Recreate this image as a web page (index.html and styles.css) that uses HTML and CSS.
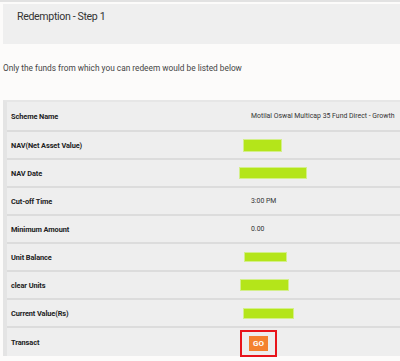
FILE: index.html
```html
<!DOCTYPE html>
<html>
<head>
<meta charset="utf-8">
<link rel="stylesheet" href="styles.css">
</head>
<body>
<div class="topline"></div>
<div class="header"><h1 class="title">Redemption - Step 1</h1></div>
<p class="intro">Only the funds from which you can redeem would be listed below</p>
<div class="table">
  <div class="row first"><div class="label">Scheme Name</div><div class="value text">Motilal Oswal Multicap 35 Fund Direct - Growth</div></div>
  <div class="row"><div class="label">NAV(Net Asset Value)</div><div class="value"><span class="bar bar-nav"></span></div></div>
  <div class="row"><div class="label">NAV Date</div><div class="value"><span class="bar bar-date"></span></div></div>
  <div class="row"><div class="label">Cut-off Time</div><div class="value text">3:00 PM</div></div>
  <div class="row"><div class="label">Minimum Amount</div><div class="value text">0.00</div></div>
  <div class="row"><div class="label">Unit Balance</div><div class="value"><span class="bar bar-units"></span></div></div>
  <div class="row"><div class="label">clear Units</div><div class="value"><span class="bar bar-clear"></span></div></div>
  <div class="row"><div class="label">Current Value(Rs)</div><div class="value"><span class="bar bar-current"></span></div></div>
  <div class="row last"><div class="label">Transact</div><div class="value"><span class="highlight"><button class="go">GO</button></span></div></div>
</div>
</body>
</html>
```
FILE: styles.css
```css
html, body {
  margin: 0;
  padding: 0;
}
body {
  background: #fcfbfa;
  font-family: Roboto, "Liberation Sans", sans-serif;
  width: 400px;
  height: 361px;
  overflow: hidden;
}
.topline {
  height: 2px;
  background: #e2e2e2;
}
.header {
  margin: 2px 0 0 3px;
  height: 40px;
  background: #efefef;
  padding: 6px 0 0 14px;
  box-sizing: border-box;
}
.title {
  margin: 0;
  font-size: 10.6px;
  line-height: 14px;
  letter-spacing: -0.35px;
  font-weight: 400;
  color: #333;
}
.intro {
  margin: 18px 0 0 3px;
  font-size: 8.3px;
  line-height: 12px;
  color: #444;
}
.table {
  margin: 26px 0 0 3px;
  border-left: 4px solid #e4e4e4;
  border-top: 2px solid #e6e6e6;
  background: #eeeeee;
}
.row {
  display: grid;
  grid-template-columns: 233px 1fr;
  align-items: center;
  height: 26px;
  border-bottom: 2px solid #dcdcdc;
}
.row.first {
  height: 28px;
}
.row.last {
  border-bottom: none;
  height: 28px;
}
.label {
  padding-left: 4px;
  font-size: 7.4px;
  font-weight: 700;
  color: #222;
  letter-spacing: -0.1px;
}
.value {
  display: flex;
  align-items: center;
}
.value.text {
  padding-left: 11px;
  font-size: 6.9px;
  color: #333;
}
.bar {
  display: block;
  background: #b4e51a;
  box-shadow: 0 0 0 1px #d3ef8a;
}
.bar-nav { margin-left: 4px; width: 37px; height: 11px; }
.bar-date { margin-left: 0; width: 66px; height: 10px; }
.bar-units { margin-left: 5px; width: 41px; height: 8px; }
.bar-clear { margin-left: 1px; width: 47px; height: 10px; }
.bar-current { margin-left: 4px; width: 49px; height: 9px; }
.highlight {
  display: flex;
  align-items: center;
  justify-content: center;
  width: 37px;
  height: 27px;
  box-sizing: border-box;
  border: 2px solid #e8141b;
  margin-top: 2px;
}
.go {
  width: 19px;
  height: 15px;
  padding: 0;
  border: none;
  background: #f4812e;
  color: #fff;
  font-family: Roboto, "Liberation Sans", sans-serif;
  font-size: 8px;
  font-weight: 700;
  line-height: 15px;
}
```
